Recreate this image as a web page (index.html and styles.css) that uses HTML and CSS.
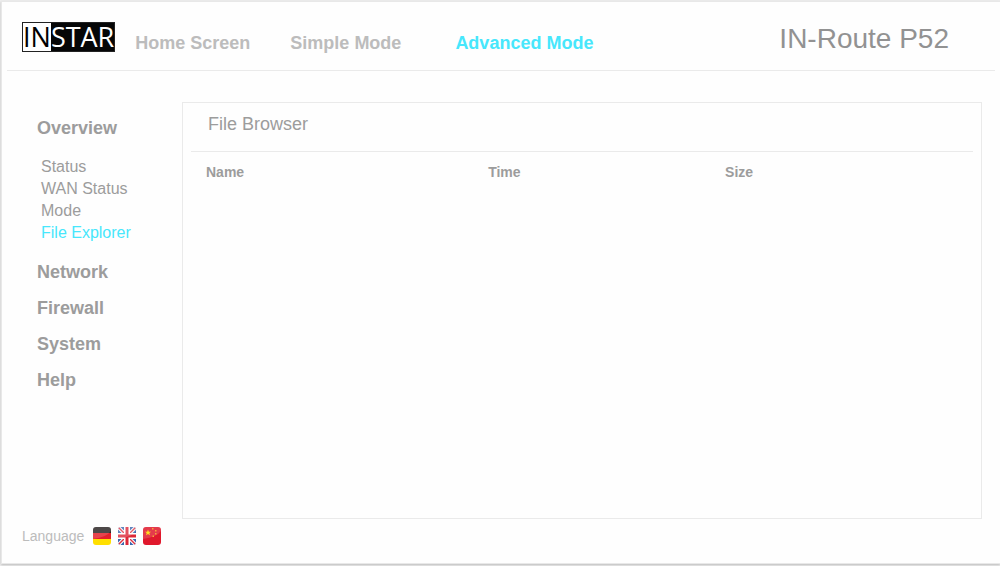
FILE: index.html
```html
<!DOCTYPE html>
<html lang="en">
<head>
<meta charset="utf-8">
<title>IN-Route P52</title>
<link rel="stylesheet" href="styles.css">
</head>
<body>
<div class="page">
  <header class="topbar">
    <a class="logo" href="#" aria-label="INSTAR"><span class="logo-in">IN</span><span class="logo-star">STAR</span></a>
    <nav class="modes">
      <a href="#">Home Screen</a>
      <a href="#">Simple Mode</a>
      <a class="active" href="#">Advanced Mode</a>
    </nav>
    <h1 class="product">IN-Route P52</h1>
  </header>
  <div class="body">
    <aside class="sidebar">
      <nav class="menu">
        <a class="section" href="#">Overview</a>
        <div class="sub">
          <a href="#">Status</a>
          <a href="#">WAN Status</a>
          <a href="#">Mode</a>
          <a class="active" href="#">File Explorer</a>
        </div>
        <a class="section" href="#">Network</a>
        <a class="section" href="#">Firewall</a>
        <a class="section" href="#">System</a>
        <a class="section" href="#">Help</a>
      </nav>
      <div class="language">
        <span class="language-label">Language</span>
        <button type="button" aria-label="Deutsch">
          <svg viewBox="0 0 18 18"><path fill="#2b2626" d="M0 0h18v6H0z"/><path fill="#e3202c" d="M0 6h18v6H0z"/><path fill="#ffdf00" d="M0 12h18v6H0z"/><path fill="#fff" opacity=".16" d="M0 0h18v4Q14 10 0 12z"/></svg>
        </button>
        <button type="button" aria-label="English">
          <svg viewBox="0 0 18 18"><path fill="#3a66ae" d="M0 0h18v18H0z"/><path stroke="#fff" stroke-width="3.500" d="M0 0l18 18M18 0L0 18"/><path stroke="#dc3040" stroke-width="1.400" d="M0 0l18 18M18 0L0 18"/><path stroke="#fff" stroke-width="6" d="M9 0v18M0 9h18"/><path stroke="#dc2637" stroke-width="3" d="M9 0v18M0 9h18"/><path fill="#fff" opacity=".2" d="M0 0h18v4Q14 10 0 12z"/></svg>
        </button>
        <button type="button" aria-label="中文">
          <svg viewBox="0 0 18 18"><path fill="#e0182c" d="M0 0h18v18H0z"/><path fill="#fff" opacity=".15" d="M0 0h18v4Q14 10 0 12z"/><path fill="#ffde20" d="M5 2.500l.8 2.200h2.300L6.300 6.100l.7 2.200L5 7 3 8.300l.7-2.200L1.900 4.700h2.300z"/><path fill="#f7a53b" d="M9 1h1.500v1.500H9zM12 3h1.500v1.500H12zM12 6h1.500v1.500H12zM9.500 8.500H11V10H9.500z"/></svg>
        </button>
      </div>
    </aside>
    <main class="panel">
      <h2>File Browser</h2>
      <table class="files">
        <thead><tr><th class="col-name" scope="col">Name</th><th class="col-time" scope="col">Time</th><th scope="col">Size</th></tr></thead>
        <tbody></tbody>
      </table>
    </main>
  </div>
</div>
</body>
</html>
```
FILE: styles.css
```css
* { box-sizing: border-box; }
body {
  margin: 0;
  background: #eee;
  color: #9c9c9c;
  font-family: "Liberation Sans", Arial, sans-serif;
}
a { color: inherit; text-decoration: none; }
.page {
  display: flex;
  flex-direction: column;
  min-height: calc(100vh - 3px);
  margin: 1px 0 2px 1px;
  padding: 0 5px;
  background: #fefefe;
  border: 1px solid #e8e8e8;
  border-right: 0;
  box-shadow: 0 1px 2px #bbb;
}
.topbar {
  display: flex;
  align-items: center;
  height: 69px;
  padding: 2px 46px 0 15px;
  border-bottom: 1px solid #eaeaea;
}
.logo {
  display: flex;
  height: 30px;
  border: 1px solid #222;
  font: 27px/28px "Open Sans", "Noto Sans", sans-serif;
}
.logo-in { background: #fff; color: #000; }
.logo-star { background: #050607; color: #fff; }
.modes {
  display: flex;
  flex: 1;
  gap: 40px;
  margin: 12px 0 0 20px;
  color: #bcbcbc;
  font-size: 18px;
  font-weight: bold;
  line-height: 20px;
}
.modes .active { margin-left: 14px; }
.active { color: #47e7fc; }
.product {
  margin: 4px 0 0;
  color: #929292;
  font-size: 28px;
  font-weight: normal;
  line-height: 32px;
}
.body {
  display: flex;
  flex: 1;
  padding: 31px 13px 0 15px;
}
.sidebar {
  display: flex;
  flex: 0 0 160px;
  flex-direction: column;
  justify-content: space-between;
  padding-bottom: 18px;
}
.menu {
  display: flex;
  flex-direction: column;
  gap: 16px;
  padding: 16px 0 0 15px;
}
.section { font-size: 18px; font-weight: bold; line-height: 20px; }
.sub {
  display: flex;
  flex-direction: column;
  padding: 2px 0 2px 4px;
  font-size: 16px;
  line-height: 22px;
}
.language {
  display: flex;
  align-items: center;
  gap: 7px;
  color: #bcbcbc;
  font-size: 14px;
  line-height: 18px;
}
.language-label { padding-right: 2px; }
.language button {
  width: 18px;
  height: 18px;
  padding: 0;
  overflow: hidden;
  background: none;
  border: 0;
  border-radius: 3px;
}
.language svg { display: block; width: 18px; height: 18px; }
.panel {
  flex: 1;
  margin-bottom: 44px;
  padding: 0 8px;
  border: 1px solid #eaeaea;
}
.panel h2 {
  margin: 0;
  padding: 11px 17px 17px;
  border-bottom: 1px solid #eaeaea;
  font-size: 18px;
  font-weight: normal;
  line-height: 20px;
}
.files {
  width: 100%;
  border-collapse: collapse;
  table-layout: fixed;
  font-size: 14px;
}
.files th { padding: 12px 0; line-height: 16px; text-align: left; }
.files th:first-child { padding-left: 15px; }
.col-name { width: 38%; }
.col-time { width: 30.3%; }
```
